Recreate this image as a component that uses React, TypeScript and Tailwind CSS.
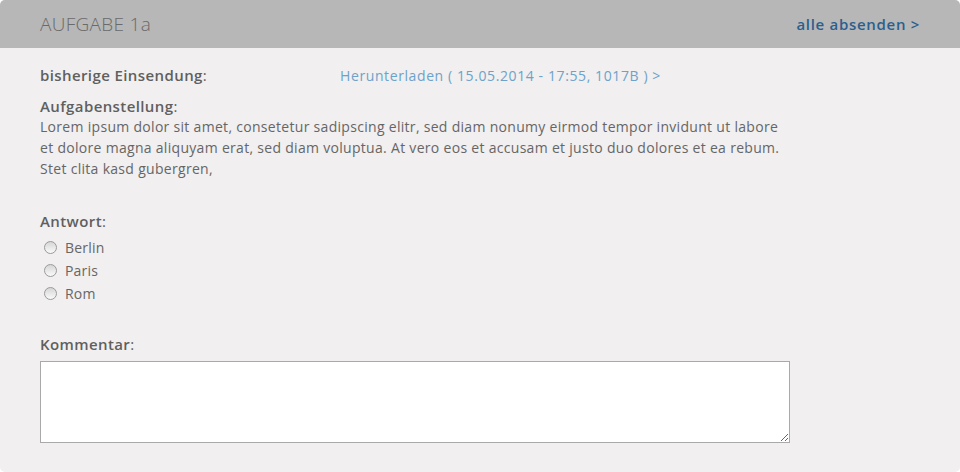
export default function App() {
  const answers = ["Berlin", "Paris", "Rom"]

  return (
    <div
      className="w-[960px] h-[472px] bg-white"
      style={{ fontFamily: '"Open Sans", "DejaVu Sans", sans-serif' }}
    >
      <div className="flex h-full flex-col rounded-[5px] bg-[#f1eff0] overflow-hidden">
        <div className="flex h-12 flex-shrink-0 items-center justify-between bg-[#b7b7b7] pl-10 pr-10">
          <span className="text-[19px] font-light text-[#6a6a6a] tracking-[0.3px]">AUFGABE 1a</span>
          <a href="#" className="text-[15px] font-semibold tracking-[0.7px] text-[#2b5f8e]">
            alle absenden &gt;
          </a>
        </div>

        <div className="flex flex-col px-10 pt-[17px] text-[14px] text-[#666]">
          <div className="flex h-5 items-center">
            <span className="w-[300px] text-[15px] font-semibold tracking-[0.4px] text-[#5f5f5f]">
              bisherige Einsendung<span className="font-normal">:</span>
            </span>
            <a href="#" className="tracking-[0.6px] text-[#6da2c9]">
              Herunterladen ( 15.05.2014 - 17:55, 1017B ) &gt;
            </a>
          </div>

          <div className="mt-[11px] text-[15px] font-semibold tracking-[0.4px] text-[#5f5f5f] leading-5">
            Aufgabenstellung<span className="font-normal">:</span>
          </div>
          <p className="w-[760px] leading-[21px] tracking-[0.3px]">
            Lorem ipsum dolor sit amet, consetetur sadipscing elitr, sed diam nonumy eirmod tempor invidunt ut labore
            <br />
            et dolore magna aliquyam erat, sed diam voluptua. At vero eos et accusam et justo duo dolores et ea rebum.
            <br />
            Stet clita kasd gubergren,
          </p>

          <div className="mt-[32px] text-[15px] font-semibold tracking-[0.4px] text-[#5f5f5f] leading-5">
            Antwort<span className="font-normal">:</span>
          </div>
          <div className="mt-[5px] flex flex-col">
            {answers.map((a) => (
              <label key={a} className="flex h-[23px] items-center gap-[8px] pl-[4px]">
                <span className="h-[13px] w-[13px] rounded-full border border-[#9a9a9a] bg-gradient-to-b from-[#d6d6d6] to-[#fafafa]" />
                <span className="tracking-[0.2px] text-[#666]">{a}</span>
              </label>
            ))}
          </div>

          <div className="mt-[29px] text-[15px] font-semibold tracking-[0.4px] text-[#5f5f5f] leading-5">
            Kommentar<span className="font-normal">:</span>
          </div>
          <textarea className="mt-[7px] h-[82px] w-[750px] border border-[#a9a9a9] bg-white" />
        </div>
      </div>
    </div>
  )
}
